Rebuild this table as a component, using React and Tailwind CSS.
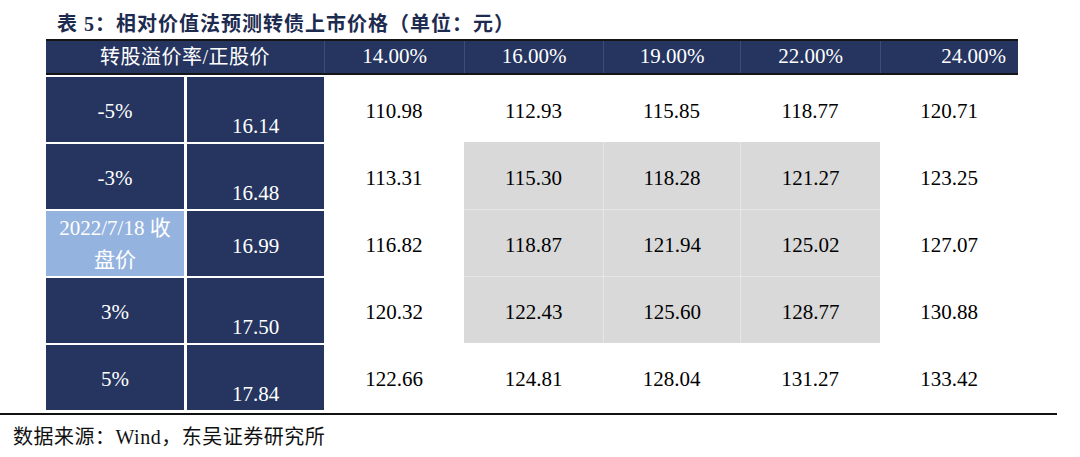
import React from "react";

const serif = { fontFamily: '"Liberation Serif", "Noto Sans CJK SC", serif' };

const headers = ["14.00%", "16.00%", "19.00%", "22.00%", "24.00%"];
const colW = ["w-[140px]", "w-[139px]", "w-[137px]", "w-[140px]", "w-[138px]"];

const rows = [
  { a: "-5%", b: "16.14", vals: ["110.98", "112.93", "115.85", "118.77", "120.71"] },
  { a: "-3%", b: "16.48", vals: ["113.31", "115.30", "118.28", "121.27", "123.25"] },
  { a: "2022/7/18 收", a2: "盘价", b: "16.99", vals: ["116.82", "118.87", "121.94", "125.02", "127.07"], close: true },
  { a: "3%", b: "17.50", vals: ["120.32", "122.43", "125.60", "128.77", "130.88"] },
  { a: "5%", b: "17.84", vals: ["122.66", "124.81", "128.04", "131.27", "133.42"] },
];

function isGray(r, c) {
  return r >= 1 && r <= 3 && c >= 1 && c <= 3;
}

function DataCell({ value, r, c }) {
  const gray = isGray(r, c);
  let cls = `${colW[c]} h-full flex items-center justify-center pt-[6px] text-[21px] text-black`;
  if (gray) {
    cls += " bg-[#d9d9d9]";
    if (r > 1) cls += " border-t border-[#e6e6e6]";
    if (c > 1) cls += " border-l border-[#e6e6e6]";
  }
  return <div className={cls}>{value}</div>;
}

export default function App() {
  return (
    <div className="w-[1080px] h-[457px] bg-white overflow-hidden" style={serif}>
      <h1 className="pl-[57px] pt-[10px] text-[20px] leading-[28px] font-bold tracking-[1px] text-[#1d2b50]">
        表 5：相对价值法预测转债上市价格（单位：元）
      </h1>

      <div className="ml-[46px] mt-[1px] w-[972px]">
        {/* header */}
        <div className="flex h-[36px] bg-[#253560] border-y-2 border-[#151515] text-white">
          <div className="w-[278px] flex items-center justify-center text-[20px] tracking-[0.5px]">
            转股溢价率/正股价
          </div>
          {headers.map((h, i) => (
            <div
              key={h}
              className={`${colW[i]} flex items-center border-l border-[#3d4c78] text-[21px] ${
                i === 4 ? "justify-end pr-[12px]" : "justify-center"
              }`}
            >
              {h}
            </div>
          ))}
        </div>

        {/* body */}
        {rows.map((row, r) => (
          <div key={r} className="flex h-[67px]">
            <div className="flex gap-[3px] w-[278px] h-full">
              <div
                className={`w-[138px] h-full border-t-2 border-white flex flex-col items-center justify-center text-white text-[21px] ${
                  row.close ? "bg-[#95b3df] leading-[32px]" : "bg-[#253560] pt-[4px]"
                }`}
              >
                <span>{row.a}</span>
                {row.a2 && <span>{row.a2}</span>}
              </div>
              <div
                className={`w-[137px] h-full border-t-2 border-white bg-[#253560] flex justify-center text-white text-[21px] ${
                  row.close ? "items-center pt-[6px]" : "items-end"
                }`}
              >
                {row.b}
              </div>
            </div>
            {row.vals.map((v, c) => (
              <DataCell key={c} value={v} r={r} c={c} />
            ))}
          </div>
        ))}
      </div>

      <div className="mt-[3px] w-[1057px] h-[2px] bg-[#111]" />

      <p className="pl-[13px] pt-[9px] text-[20px] leading-[26px] tracking-[0.5px] text-[#111]">
        数据来源：Wind，东吴证券研究所
      </p>
    </div>
  );
}
